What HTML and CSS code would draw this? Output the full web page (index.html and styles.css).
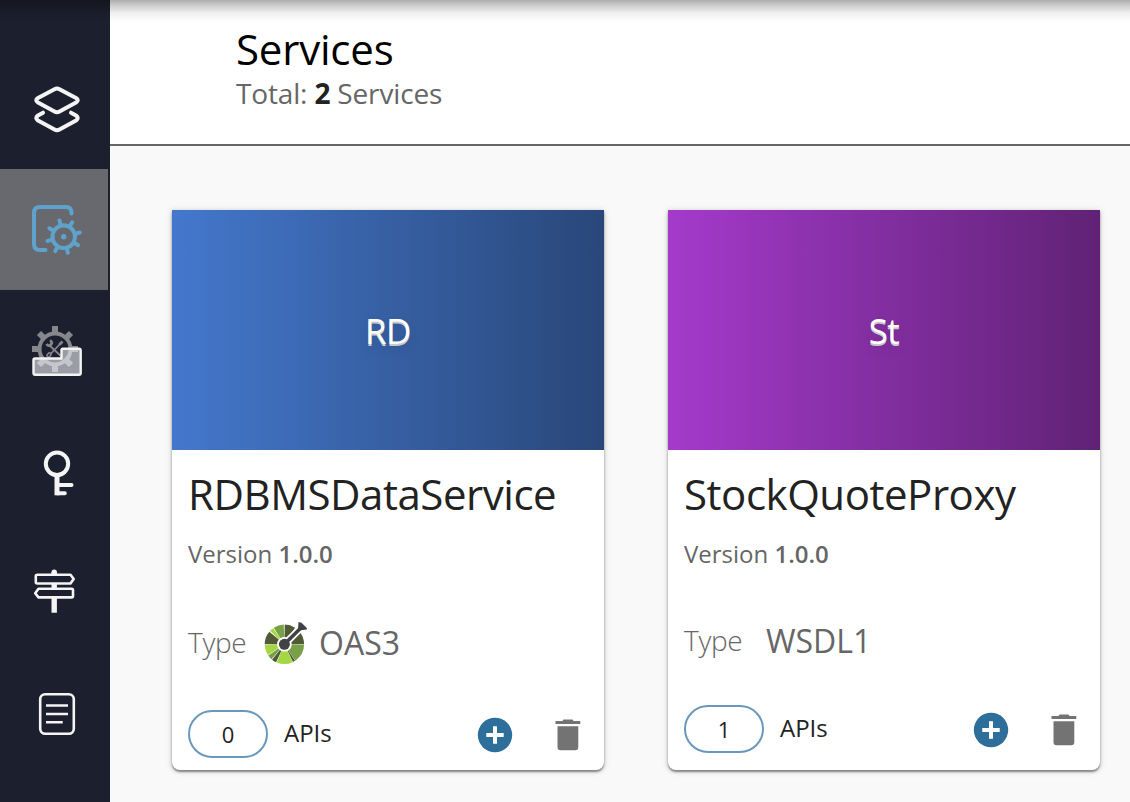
FILE: index.html
```html
<!DOCTYPE html>
<html lang="en">
<head>
<meta charset="utf-8">
<title>Services</title>
<link rel="stylesheet" href="styles.css">
</head>
<body>
<div class="app">
  <nav class="sidebar">
    <a class="nav-item"><svg class="nav-icon line" viewBox="0 0 110 121"><path d="M54.5 41.2Q57 39.8 59.5 41.2L76 50Q79.5 52.2 76 54.6L59.5 63.5Q57 65 54.5 63.5L38 54.6Q34.500 52.2 38 50ZM43 64.700L38 67.500Q34.500 70 38 72.500L54.500 81.500Q57 83 59.500 81.500L76 72.500Q79.500 70 76 67.500L71 64.700"/></svg></a>
    <a class="nav-item active"><svg class="nav-icon line blue" viewBox="0 0 110 121"><path d="M71.500 44.500V43.500Q71.500 38 66 38H40Q34 38 34 44V75Q34 81 40 81H45.500"/><g transform="translate(63.700 67.700) rotate(-14.500)"><circle r="11.300"/><path d="M12 0H16.700M-12 0H-16.700M0 12V16.700M0-12V-16.700M8.500 8.500 11.800 11.800M-8.500 8.500-11.800 11.800M8.500-8.500 11.800-11.800M-8.500-8.500-11.800-11.800"/></g><circle class="dot" cx="63.700" cy="67.700" r="2.700"/></svg></a>
    <a class="nav-item"><svg class="nav-icon" viewBox="0 0 110 121"><g class="cog" transform="translate(55 59)"><circle r="15.500"/><path d="M0-16V-23M0 16V23M16 0H23M-16 0H-23M-11-11-16-16M11-11 16-16M11 11 16 16M-11 11-16 16"/></g><path class="tools" d="M49 55 62 67M61.500 52.500 50 64.500"/><path class="tool-ends" d="M46.500 54Q48.500 57 51 54.500 53 52 50 50.500M59.500 54.500 62.500 51.500"/><ellipse class="grip" cx="49" cy="65" rx="1.600" ry="2.300" transform="rotate(40 49 65)"/><path class="block" d="M35 68.500H61.500V60Q61.500 58.700 63 58.700H79Q80.700 58.700 80.700 60.400V83Q80.700 84.700 79 84.700H35.200Q33.500 84.700 33.500 83V70Q33.500 68.500 35 68.500Z"/></svg></a>
    <a class="nav-item"><svg class="nav-icon line" viewBox="0 0 110 121"><circle cx="57" cy="52.800" r="11.200"/><path d="M57 74H71.500M57 82.300H64.800"/><path class="stem" d="M57 64V84.300"/></svg></a>
    <a class="nav-item"><svg class="nav-icon line thin" viewBox="0 0 110 121"><path d="M37.200 42.700H70.500L73.700 47 70.500 51.500H37.200Q35.800 51.500 35.800 50V44.200Q35.800 42.700 37.200 42.700ZM38.500 56.800H71.700Q73 56.800 73 58.200V64Q73 65.400 71.700 65.400H38.500L35.200 61.200Z"/><path class="post" d="M54.200 40V42.500M54.200 51.500V57M54.200 65.500V80.700"/><circle class="dot" cx="54.200" cy="40.200" r="2.700"/></svg></a>
    <a class="nav-item"><svg class="nav-icon line thin" viewBox="0 0 110 121"><rect x="40.200" y="41.200" width="33.600" height="39.500" rx="5"/><path class="square" d="M46 52.500H68M46 61H68M46 69.300H62.700"/></svg></a>
  </nav>
  <div class="main">
    <header class="header">
      <h1 class="page-title">Services</h1>
      <p class="total">Total: <b>2</b> Services</p>
    </header>
    <main class="cards">
      <article class="card">
        <div class="cover cover-blue"><span>RD</span></div>
        <div class="body">
          <h2 class="name">RDBMSDataService</h2>
          <p class="version">Version <b>1.0.0</b></p>
          <div class="type">
            <span class="type-label">Type</span>
            <svg class="oas" viewBox="0 0 44 44"><g class="wheel" transform="translate(20.400 23.300)">
              <circle class="green" r="13.500" pathLength="360" stroke-dasharray="55 305" stroke-dashoffset="-1"/>
              <circle class="dark" r="13.500" pathLength="360" stroke-dasharray="7 353" stroke-dashoffset="-57"/>
              <circle class="lime" r="13.500" pathLength="360" stroke-dasharray="48 312" stroke-dashoffset="-65"/>
              <circle class="dark" r="13.500" pathLength="360" stroke-dasharray="14 346" stroke-dashoffset="-115"/>
              <circle class="green" r="13.500" pathLength="360" stroke-dasharray="14 346" stroke-dashoffset="-131"/>
              <circle class="lime" r="13.500" pathLength="360" stroke-dasharray="31 329" stroke-dashoffset="-147"/>
              <circle class="dark" r="13.500" pathLength="360" stroke-dasharray="40 320" stroke-dashoffset="-180"/>
              <circle class="lime" r="13.500" pathLength="360" stroke-dasharray="12 348" stroke-dashoffset="-223"/>
              <circle class="green" r="13.500" pathLength="360" stroke-dasharray="31 329" stroke-dashoffset="-237"/>
              <circle class="dark" r="13.500" pathLength="360" stroke-dasharray="32 328" stroke-dashoffset="-271"/>
              <circle class="dark" r="13.500" pathLength="360" stroke-dasharray="34 326" stroke-dashoffset="-325"/>
            </g><path class="halo" d="M20.400 23.300 35 8.700"/><path class="handle" d="M20.400 23.300 36 7.700"/><circle class="hub" cx="20.400" cy="23.300" r="5.500"/><path class="hub" d="M34.500 1 37.500 1.800 42.800 7 42.800 8.500 35.200 9.500 34 8.200Z"/></svg>
            <span class="type-value">OAS3</span>
          </div>
          <div class="actions">
            <span class="count">0</span><span class="apis">APIs</span>
            <svg class="add" viewBox="0 0 36 36"><circle cx="18" cy="18" r="17.200"/><path d="M9.300 18H26.700M18 9.300V26.700"/></svg>
            <svg class="trash" viewBox="0 0 26 32"><path d="M.5 2H7.500L8.500.6H17.500L18.500 2H25.300V5H.5ZM2.500 7.200H23.300V28Q23.300 31.200 20.300 31.200H5.500Q2.500 31.200 2.500 28Z"/></svg>
          </div>
        </div>
      </article>
      <article class="card">
        <div class="cover cover-purple"><span>St</span></div>
        <div class="body">
          <h2 class="name">StockQuoteProxy</h2>
          <p class="version">Version <b>1.0.0</b></p>
          <div class="type compact">
            <span class="type-label">Type</span>
            <span class="type-value">WSDL1</span>
          </div>
          <div class="actions">
            <span class="count">1</span><span class="apis">APIs</span>
            <svg class="add" viewBox="0 0 36 36"><circle cx="18" cy="18" r="17.200"/><path d="M9.300 18H26.700M18 9.300V26.700"/></svg>
            <svg class="trash" viewBox="0 0 26 32"><path d="M.5 2H7.500L8.500.6H17.500L18.500 2H25.300V5H.5ZM2.500 7.200H23.300V28Q23.300 31.200 20.300 31.200H5.500Q2.500 31.200 2.500 28Z"/></svg>
          </div>
        </div>
      </article>
    </main>
  </div>
  <div class="top-shadow"></div>
</div>
</body>
</html>
```
FILE: styles.css
```css
* { box-sizing: border-box; }
body { margin: 0; font-family: "Open Sans", sans-serif; color: #222; background: #f9f9f9; overflow: hidden; }
h1, h2, p { margin: 0; font-weight: 400; white-space: nowrap; }
.app { display: flex; width: 1130px; height: 802px; position: relative; }
.sidebar { width: 110px; flex: none; background: #1c1f2d; padding-top: 48px; }
.nav-item { display: block; width: 108px; height: 121px; overflow: hidden; }
.nav-item.active { background: #68696e; }
.nav-icon { display: block; width: 110px; height: 121px; fill: none; }
.line { stroke: #f4f4f4; stroke-width: 4; stroke-linecap: round; stroke-linejoin: round; }
.line.blue { stroke: #5fa2cb; }
.line.thin { stroke-width: 2.6; }
.line .dot { fill: #f4f4f4; stroke: none; }
.line.blue .dot { fill: #5fa2cb; }
.line .stem { stroke-width: 5; stroke-linecap: butt; }
.line .post { stroke-width: 5.4; stroke-linecap: butt; }
.line .square { stroke-linecap: butt; }
.cog { stroke: #85878c; stroke-width: 4; }
.cog path { stroke-width: 6; }
.tools { stroke: #85878c; stroke-width: 1.8; }
.tool-ends { stroke: #85878c; stroke-width: 2.8; }
.grip { stroke: #85878c; stroke-width: 1.5; }
.block { fill: rgba(240, 241, 247, .6); stroke: #f3f3f3; stroke-width: 2.4; }
.main { flex: 1; min-width: 0; }
.header { height: 146px; padding: 20px 0 0 126px; background: #fff; border-bottom: 2px solid #666; }
.page-title { font-size: 42px; line-height: 58px; color: #000; letter-spacing: -.2px; }
.total { font-size: 28px; line-height: 30px; color: #666; letter-spacing: -.16px; }
.total b { color: #222; }
.cards { display: flex; gap: 64px; padding: 64px 0 0 62px; }
.card { width: 432px; height: 560px; flex: none; background: #fff; border-radius: 0 0 8px 8px; box-shadow: 0 2px 2px rgba(0,0,0,.4), 0 1px 6px rgba(0,0,0,.22); }
.cover { height: 240px; display: flex; align-items: center; justify-content: center; color: #fff; font-size: 35px; font-weight: 500; letter-spacing: -.5px; text-shadow: 0 2px 0 #c9c9c9, 0 6px 12px rgba(0,0,0,.12); }
.cover-blue { background: linear-gradient(90deg, #4478cd, #294779); }
.cover-purple { background: linear-gradient(90deg, #a43acb, #602275); }
.body { padding: 16px; }
.name { font-size: 42px; line-height: 56px; letter-spacing: -.46px; }
.version { margin-top: 16px; font-size: 24px; line-height: 32px; color: #666; }
.version b { font-weight: 600; }
.type { display: flex; align-items: center; height: 48px; margin-top: 49px; color: #666; }
.type-label { width: 76px; font-size: 28px; font-weight: 300; letter-spacing: -.3px; padding-bottom: 2px; }
.oas { width: 44px; height: 44px; margin-right: 11px; }
.type-value { font-size: 32px; padding-bottom: 2px; }
.compact { height: 43px; }
.compact .type-label { width: 82px; }
.compact .type-value { padding-bottom: 1px; }
.wheel { fill: none; stroke-width: 12.4; }
.green { stroke: #78a147; }
.lime { stroke: #a5d742; }
.dark { stroke: #505b35; }
.halo { stroke: #fff; stroke-width: 7; }
.handle { stroke: #414245; stroke-width: 3.5; }
.hub { fill: #414245; }
.actions { display: flex; align-items: center; height: 48px; margin-top: 43px; }
.count { width: 80px; height: 48px; border: 2px solid #6a98bd; border-radius: 24px; display: flex; align-items: center; justify-content: center; font-size: 22px; }
.apis { margin-left: 16px; font-size: 24px; padding-bottom: 3px; }
.add { width: 36px; height: 36px; margin: 1px 0 0 auto; }
.add circle { fill: #2e6e9b; }
.add path { stroke: #fff; stroke-width: 4; }
.trash { width: 26px; height: 32px; margin: 1px 7px 0 42px; fill: #737373; }
.top-shadow { position: absolute; inset: 0 0 auto; height: 22px; background: linear-gradient(rgba(0,0,0,.32), rgba(0,0,0,.22) 20%, rgba(0,0,0,.06) 60%, transparent); }
```
